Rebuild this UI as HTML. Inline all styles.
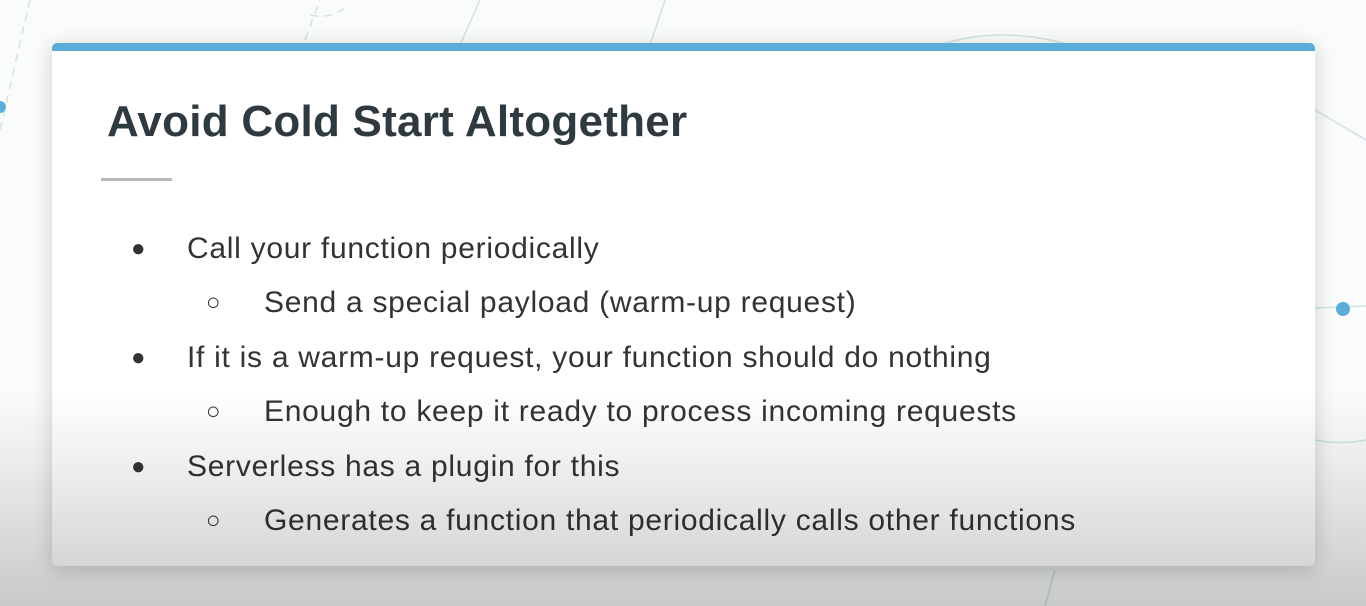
<!DOCTYPE html>
<html><head><style>
html,body{margin:0;padding:0}
body{width:1366px;height:606px;position:relative;overflow:hidden;background:#fafbfb;font-family:"Liberation Sans",sans-serif}
.card{position:absolute;left:52px;top:43px;width:1263px;height:523px;background:#fff;border-radius:5px;box-shadow:0 4px 22px rgba(0,0,0,.18);overflow:hidden}
.bar{position:absolute;left:0;top:0;right:0;height:8px;background:#5aacd9}
h1{position:absolute;left:55px;top:54px;margin:0;font-size:44px;font-weight:bold;color:#2f3a40;letter-spacing:0.25px;white-space:nowrap}
.rule{position:absolute;left:49px;top:135px;width:71px;height:3px;background:#b8b8b8}
.li{position:absolute;font-size:30px;letter-spacing:0.72px;color:#333;white-space:nowrap}
.b{position:absolute;font-size:24px;color:#333}
.shade{position:absolute;left:0;top:0;width:1366px;height:606px;background:linear-gradient(to bottom,rgba(0,0,0,0) 0,rgba(0,0,0,0) 390px,rgba(0,0,0,.06) 460px,rgba(0,0,0,.2) 606px);pointer-events:none}
</style></head><body>
<svg width="1366" height="606" style="position:absolute;left:0;top:0">
<g fill="none" stroke="#cfe3e8" stroke-width="1.5">
<path d="M0 130 L30 0" stroke-dasharray="8 6"/>
<path d="M305 40 L320 0" stroke-dasharray="8 6"/>
<path d="M310 15 Q330 20 350 5" stroke-dasharray="8 6"/>
<path d="M460 45 L480 0"/>
<path d="M650 45 L665 0"/>
<path d="M940 45 Q1000 25 1070 45"/>
<path d="M1315 110 L1366 140"/>
<path d="M1315 308 L1366 306"/>
<path d="M1315 440 Q1340 445 1366 440"/>
<path d="M1045 606 L1055 570"/>
</g>
<circle cx="1343" cy="309" r="7" fill="#5aacd9"/>
<circle cx="0" cy="107" r="6" fill="#5aacd9"/>
</svg>
<div class="card">
<div class="bar"></div>
<h1>Avoid Cold Start Altogether</h1>
<div class="rule"></div>
<div class="b" style="left:79px;top:192px">●</div><div class="li" style="left:135px;top:189px">Call your function periodically</div>
<div class="b" style="left:154px;top:246px">○</div><div class="li" style="left:212px;top:243px">Send a special payload (warm-up request)</div>
<div class="b" style="left:79px;top:301px">●</div><div class="li" style="left:135px;top:298px">If it is a warm-up request, your function should do nothing</div>
<div class="b" style="left:154px;top:355px">○</div><div class="li" style="left:212px;top:352px">Enough to keep it ready to process incoming requests</div>
<div class="b" style="left:79px;top:410px">●</div><div class="li" style="left:135px;top:407px">Serverless has a plugin for this</div>
<div class="b" style="left:154px;top:464px">○</div><div class="li" style="left:212px;top:461px">Generates a function that periodically calls other functions</div>
</div>
<div class="shade"></div>
</body></html>
